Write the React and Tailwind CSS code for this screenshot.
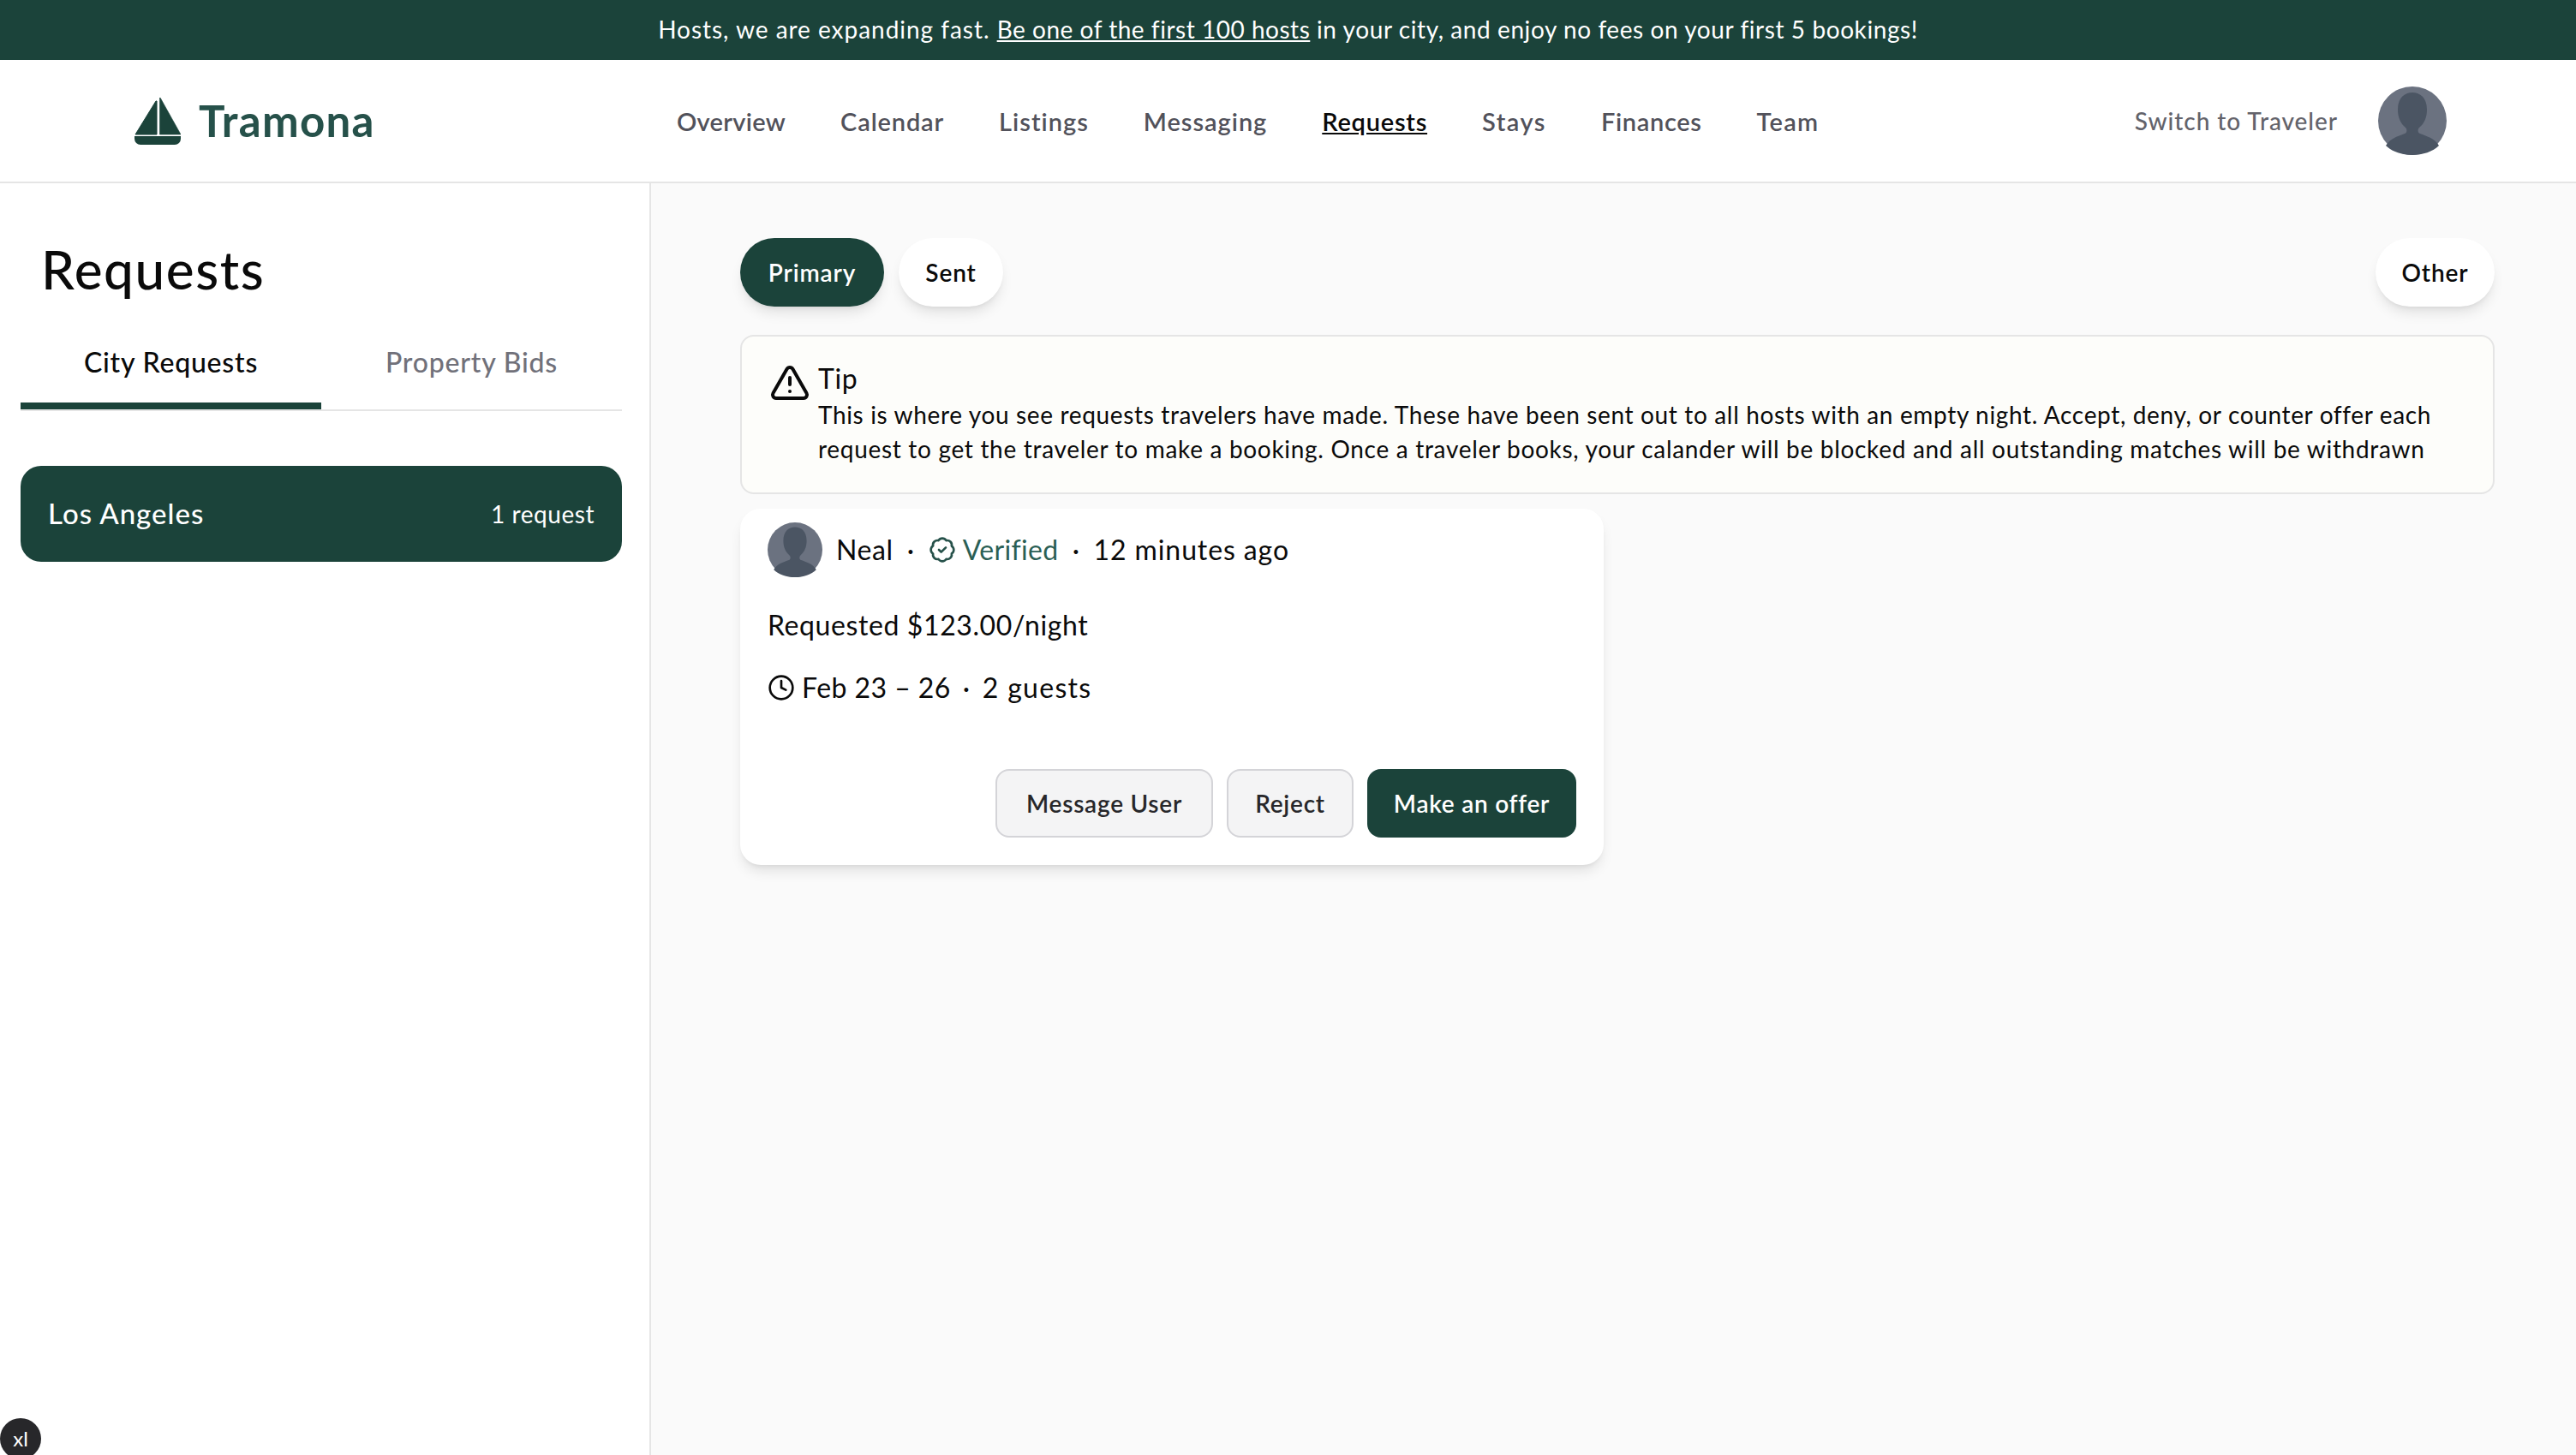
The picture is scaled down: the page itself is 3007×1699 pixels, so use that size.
import React from "react";
import { BadgeCheck, Clock, TriangleAlert } from "lucide-react";

function Avatar({ className }) {
  return (
    <svg viewBox="0 0 80 80" className={className}>
      <circle cx="40" cy="40" r="40" fill="#6b7280" />
      <path d="M40 7c-9 0-17 6-17 20 0 9 3 16 9 21 2 2 2 6-1 7-7 3-17 5-22 14 7 7 19 11 31 11s24-4 31-11c-5-9-15-11-22-14-3-1-3-5-1-7 6-5 9-12 9-21 0-14-8-20-17-20z" fill="#4b5563" />
    </svg>
  );
}

function Logo() {
  return (
    <svg viewBox="0 0 54 55" className="w-[54px] h-[55px] shrink-0">
      <path d="M26 4 L26 43 L1 43 L25 4 Z" fill="#1b433a" stroke="#1b433a" strokeWidth="1" strokeLinejoin="round" />
      <path d="M29.5 0 L29.5 43 L54 43 L30 0 Z" fill="#1b433a" stroke="#1b433a" strokeWidth="0.6" strokeLinejoin="round" />
      <path d="M0 45 H54 V48 A7 7 0 0 1 47 55 H7 A7 7 0 0 1 0 48 Z" fill="#1b433a" />
    </svg>
  );
}

const nav = [
  { label: "Overview", cls: "tracking-[0.3px]" },
  { label: "Calendar", cls: "tracking-[0.85px]" },
  { label: "Listings", cls: "tracking-[1px]" },
  { label: "Messaging", cls: "tracking-[0.95px]" },
  { label: "Requests", cls: "tracking-[0.75px] underline text-[#0a0a0a]" },
  { label: "Stays", cls: "tracking-[1.5px]" },
  { label: "Finances", cls: "tracking-[0.65px]" },
  { label: "Team", cls: "tracking-[1.2px]" },
];

export default function App() {
  return (
    <div className="relative h-[1699px] w-full overflow-hidden flex flex-col bg-[#fafafa] text-[#0a0a0a] font-['Lato','Liberation_Sans',sans-serif] text-[28px] tracking-[0.65px]">
      <div className="h-[70px] shrink-0 bg-[#1b433a] text-white flex items-center justify-center pb-[2px]">
        <p>
          <span className="tracking-[0.97px]">Hosts, we are expanding fast. </span>
          <span className="underline tracking-[0.52px]">Be one of the first 100 hosts</span>
          <span className="tracking-[0.58px]"> in your city, and enjoy no fees on your first 5 bookings!</span>
        </p>
      </div>

      <header className="h-[144px] shrink-0 bg-white border-b-2 border-[#e5e5e5] flex items-center">
        <div className="w-[790px] shrink-0 pl-[157px] flex items-center gap-[21px]">
          <Logo />
          <span className="text-[51px] font-bold text-[#26514a] tracking-[1.3px]">Tramona</span>
        </div>
        <nav className="flex items-center gap-[64px] pt-[2px] text-[29px] font-semibold text-[#52525b]">
          {nav.map((n) => (
            <span key={n.label} className={n.cls}>{n.label}</span>
          ))}
        </nav>
        <div className="ml-auto pr-[151px] flex items-center gap-[47px]">
          <span className="text-[#63636b] font-medium tracking-[0.95px]">Switch to Traveler</span>
          <Avatar className="w-[80px] h-[80px]" />
        </div>
      </header>

      <div className="flex-1 flex min-h-0">
        <aside className="w-[760px] shrink-0 bg-white border-r-2 border-[#e5e5e5] pl-[24px] pr-[32px] flex flex-col">
          <h1 className="pl-[24px] pt-[62px] text-[62px] leading-[76px] font-medium tracking-[1.6px]">Requests</h1>
          <div className="mt-[24px] flex border-b-2 border-[#e5e5e5] h-[104px]">
            <div className="w-[351px] h-[102px] border-b-[8px] border-[#1b433a] flex items-center justify-center text-[32px] font-medium tracking-[0.8px]">City Requests</div>
            <div className="w-[351px] pb-[8px] flex items-center justify-center text-[32px] text-[#71717a] font-medium tracking-[0.8px]">Property Bids</div>
          </div>
          <div className="mt-[64px] h-[112px] rounded-[24px] bg-[#1b433a] text-white flex items-center justify-between px-[32px]">
            <span className="text-[33px] font-medium tracking-[1px]">Los Angeles</span>
            <span className="tracking-[0.55px]">1 request</span>
          </div>
        </aside>

        <main className="flex-1 pl-[104px] pr-[95px] pt-[64px]">
          <div className="flex items-center gap-[17px]">
            <button className="h-[80px] w-[168px] rounded-[40px] bg-[#1b433a] text-white font-semibold shadow-lg tracking-[0.9px]">Primary</button>
            <button className="h-[80px] w-[122px] rounded-[40px] bg-white font-semibold shadow-lg tracking-[0.9px]">Sent</button>
            <button className="ml-auto h-[80px] w-[139px] rounded-[40px] bg-white font-semibold shadow-lg tracking-[0.9px]">Other</button>
          </div>

          <div className="mt-[33px] h-[186px] rounded-[16px] border-2 border-[#e5e5e5] bg-[#fdfdfa] pl-[32px] pt-[26px] flex gap-[9px]">
            <TriangleAlert className="w-[48px] h-[48px] mt-[4px] shrink-0" strokeWidth={2} />
            <div className="leading-[40px]">
              <p className="text-[32px] leading-[45px]">Tip</p>
              <p>This is where you see requests travelers have made. These have been sent out to all hosts with an empty night. Accept, deny, or counter offer each</p>
              <p className="tracking-[0.69px]">request to get the traveler to make a booking. Once a traveler books, your calander will be blocked and all outstanding matches will be withdrawn</p>
            </div>
          </div>

          <div className="mt-[17px] w-[1008px] h-[416px] rounded-[24px] bg-white shadow-lg p-[32px] pt-[16px] flex flex-col text-[32px] tracking-[0.6px]">
            <div className="flex items-center">
              <Avatar className="w-[64px] h-[64px]" />
              <span className="ml-[16px]">Neal</span>
              <span className="mx-[16px]">·</span>
              <BadgeCheck className="w-[32px] h-[32px] text-[#26514a]" strokeWidth={2} />
              <span className="ml-[8px] text-[#2b5f55] tracking-[0.35px]">Verified</span>
              <span className="mx-[16px]">·</span>
              <span className="tracking-[0.9px]">12 minutes ago</span>
            </div>
            <p className="mt-[32px] leading-[48px]">Requested $123.00/night</p>
            <div className="mt-[25px] flex items-center leading-[48px]">
              <Clock className="w-[32px] h-[32px] mr-[8px]" strokeWidth={2} />
              <span className="tracking-[0.45px]">Feb 23 – 26</span>
              <span className="mx-[14px]">·</span>
              <span className="tracking-[1.3px]">2 guests</span>
            </div>
            <div className="mt-auto flex justify-end gap-[16px] text-[28px] font-semibold tracking-[0.75px]">
              <button className="h-[80px] w-[254px] rounded-[16px] border-2 border-[#d4d4d8] bg-[#f4f4f5] text-[#27272a]">Message User</button>
              <button className="h-[80px] w-[148px] rounded-[16px] border-2 border-[#d4d4d8] bg-[#f4f4f5] text-[#27272a]">Reject</button>
              <button className="h-[80px] w-[244px] rounded-[16px] bg-[#1b433a] text-white">Make an offer</button>
            </div>
          </div>
        </main>
      </div>

      <div className="absolute left-0 top-[1656px] w-[48px] h-[48px] rounded-full bg-[#27272a] text-white flex items-center justify-center text-[24px] tracking-normal">xl</div>
    </div>
  );
}
